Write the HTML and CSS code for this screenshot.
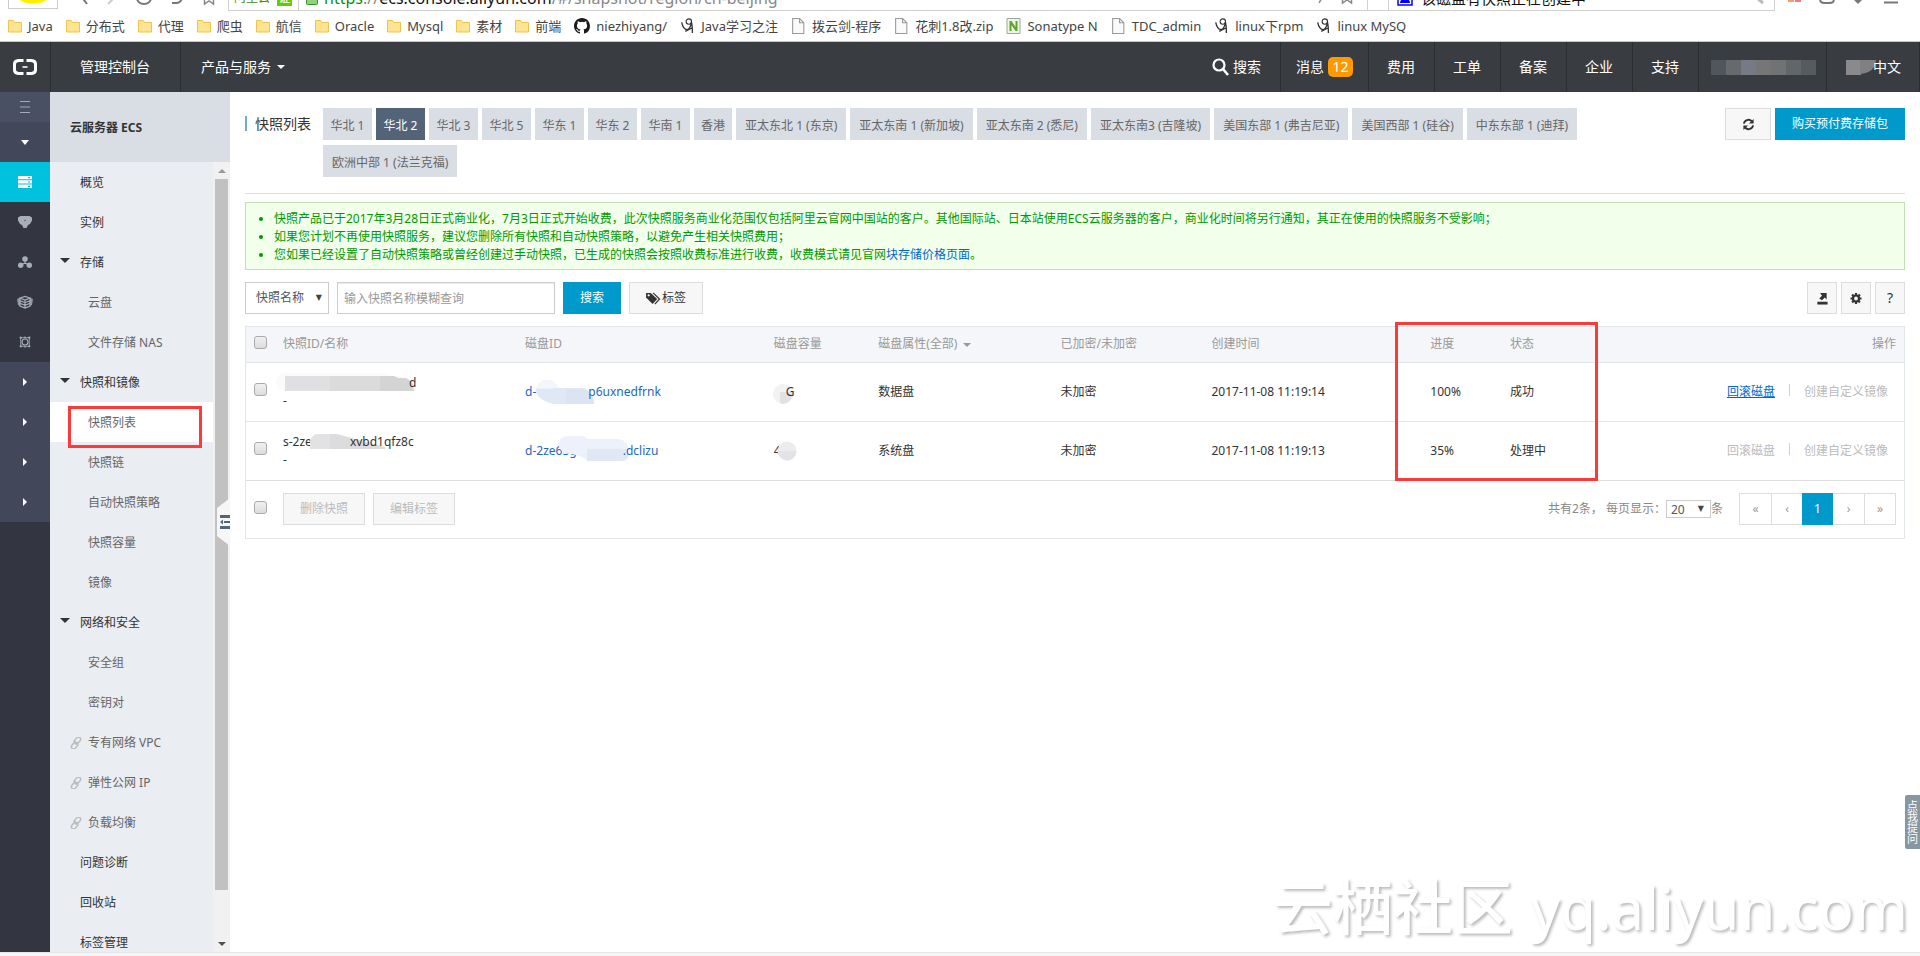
FILE: index.html
```
<!DOCTYPE html>
<html lang="zh-CN">
<head>
<meta charset="utf-8">
<title>快照列表 - 云服务器 ECS</title>
<link rel="stylesheet" href="styles.css">
</head>
<body>
<svg class="defs" aria-hidden="true">
  <symbol id="folder" viewBox="0 0 14 14"><path d="M.5 1.5h5l1 2h7v9.500h-13z" fill="#fde48f" stroke="#efc350"/></symbol>
  <symbol id="page" viewBox="0 0 12 15"><path d="M.5.5h6.500l4 4v10h-10.500z" fill="#fafafa" stroke="#999"/><path d="M7 .5v4h4" fill="none" stroke="#999"/></symbol>
  <symbol id="doodle" viewBox="0 0 15 18"><circle cx="9" cy="4" r="3" fill="none" stroke="#333" stroke-width="1.300"/><path d="M1 5c1 5 3 8 6 8s4-3 5-8c1 4 1 8 1 12M5 15l8-4" fill="none" stroke="#333" stroke-width="1.500"/></symbol>
  <symbol id="chain" viewBox="0 0 12 12"><g fill="none" stroke="#bbb" stroke-width="1.400"><rect x="5" y="-.5" width="4.500" height="7.500" rx="2.200" transform="rotate(40 7 3.500)"/><rect x="2.500" y="5" width="4.500" height="7.500" rx="2.200" transform="rotate(40 5 8.500)"/></g></symbol>
</svg>

<header class="browser">
  <div class="address-row">
    <span class="avatar"></span>
    <svg class="nav-icons" viewBox="0 0 150 11" aria-hidden="true"><g fill="none" stroke="#777" stroke-width="2"><path d="M12 -4l6 8"/><path d="M39 4l8-8" stroke="#ccc"/><path d="M68-2a7 6 0 0 0 14 0"/><path d="M103 3h4a6 6 0 0 0 6-5"/></g></svg>
    <svg class="star" viewBox="0 0 12 11" aria-hidden="true"><path d="M1.500-4v8l4.500-3 4.500 3v-8" fill="none" stroke="#888" stroke-width="1.500"/></svg>
    <div class="address">
      <span class="site">阿里云</span><span class="cert">证</span>
      <span class="rule"></span>
      <svg class="lock" viewBox="0 0 12 14"><rect x=".5" y=".5" width="11" height="13" rx="1" fill="#8fd07c" stroke="#3c8d2f"/></svg>
      <span class="url"><b class="scheme">https</b>://<b class="host">ecs.console.aliyun.com</b>/#/snapshot/region/cn-beijing</span>
      <svg class="star bolt" viewBox="0 0 12 11" aria-hidden="true"><path d="M6-3l-4 7" stroke="#888" stroke-width="1.500"/></svg>
      <svg class="star star-end" viewBox="0 0 12 11" aria-hidden="true"><path d="M1.500-4v8l4.500-3 4.500 3v-8" fill="none" stroke="#888" stroke-width="1.500"/></svg>
      <span class="rule"></span><span class="dot"></span><span class="rule"></span>
      <svg class="paw" viewBox="0 0 16 16"><rect x="1" y="1" width="14" height="14" fill="#fff" stroke="#00f" stroke-width="1.500"/><path d="M3 13c0-3 3-5 5-5s5 2 5 5z" fill="#00f"/></svg>
      <span class="query">该磁盘有快照正在创建中</span>
      <svg class="lens" viewBox="0 0 12 11"><path d="M3-1l6 5" stroke="#bbb" stroke-width="3"/></svg>
    </div>
    <svg class="tool-icons" viewBox="0 0 145 11" aria-hidden="true"><path d="M13 0h6v2h-6z" fill="#fb9a6a"/><path d="M20 0h6v2h-6z" fill="#f0787e"/><path d="M45-2c0 4 1 5 5 5h4c4 0 5-1 5-5" fill="none" stroke="#777" stroke-width="2"/><path d="M79 0h8l-4 4z" fill="#777"/><path d="M109 1.500h14v2h-14z" fill="#777"/></svg>
  </div>
  <nav class="bookmarks" aria-label="书签">
    <a href="#"><svg class="i14"><use href="#folder"/></svg>Java</a>
    <a href="#"><svg class="i14"><use href="#folder"/></svg>分布式</a>
    <a href="#"><svg class="i14"><use href="#folder"/></svg>代理</a>
    <a href="#"><svg class="i14"><use href="#folder"/></svg>爬虫</a>
    <a href="#"><svg class="i14"><use href="#folder"/></svg>航信</a>
    <a href="#"><svg class="i14"><use href="#folder"/></svg>Oracle</a>
    <a href="#"><svg class="i14"><use href="#folder"/></svg>Mysql</a>
    <a href="#"><svg class="i14"><use href="#folder"/></svg>素材</a>
    <a href="#"><svg class="i14"><use href="#folder"/></svg>前端</a>
    <a href="#"><svg class="i16" viewBox="0 0 16 16"><path fill="#1b1b1b" d="M8 0C3.580 0 0 3.580 0 8c0 3.540 2.290 6.530 5.470 7.590.4.070.55-.17.55-.38 0-.19-.01-.82-.01-1.490-2.010.37-2.530-.49-2.690-.94-.09-.23-.48-.94-.82-1.130-.28-.15-.68-.52-.01-.53.63-.01 1.080.58 1.230.82.72 1.210 1.870.87 2.330.66.07-.52.28-.87.51-1.070-1.780-.2-3.640-.89-3.640-3.950 0-.87.31-1.590.82-2.150-.08-.2-.36-1.020.08-2.120 0 0 .67-.21 2.200.82a7.500 7.500 0 0 1 4 0c1.530-1.040 2.200-.82 2.200-.82.44 1.100.16 1.920.08 2.120.51.56.82 1.270.82 2.150 0 3.070-1.870 3.750-3.650 3.950.29.25.54.73.54 1.480 0 1.070-.01 1.930-.01 2.200 0 .21.15.46.55.38A8 8 0 0 0 16 8c0-4.420-3.580-8-8-8z"/></svg>niezhiyang/</a>
    <a href="#"><svg class="i15"><use href="#doodle"/></svg>Java学习之注</a>
    <a href="#"><svg class="i15"><use href="#page"/></svg>拨云剑-程序</a>
    <a href="#"><svg class="i15"><use href="#page"/></svg>花刺1.8改.zip</a>
    <a href="#"><svg class="i15" viewBox="0 0 14 16"><path d="M.5.5h13v15h-13z" fill="#eef5e8" stroke="#9a9"/><path d="M3 13V3h2l4 6V3h2v10H9L5 7v6z" fill="#5fa52a"/></svg>Sonatype N</a>
    <a href="#"><svg class="i15"><use href="#page"/></svg>TDC_admin</a>
    <a href="#"><svg class="i15"><use href="#doodle"/></svg>linux下rpm</a>
    <a href="#"><svg class="i15"><use href="#doodle"/></svg>linux MySQ</a>
  </nav>
</header>

<nav class="topbar" aria-label="控制台导航">
  <a class="logo" href="#" aria-label="阿里云"><svg viewBox="0 0 24 16"><g fill="none" stroke="#fff" stroke-width="3"><path d="M10.500 1.500H5.500Q1.500 2 1.500 5v6q0 3 4 3.500h5M13.500 1.500h5q4 .5 4 3.500v6q0 3-4 3.500h-5"/></g><path d="M9.500 7.200h5v1.600h-5z" fill="#fff"/></svg></a>
  <a class="home" href="#">管理控制台</a>
  <a class="products" href="#">产品与服务<span class="caret"></span></a>
  <span class="grow"></span>
  <a class="search" href="#"><svg viewBox="0 0 17 18"><circle cx="7" cy="7" r="5.500" fill="none" stroke="#fff" stroke-width="2.200"/><path d="M11 11l5 6" stroke="#fff" stroke-width="2.600"/></svg>搜索</a>
  <a class="messages" href="#">消息<span class="badge">12</span></a>
  <a href="#">费用</a>
  <a href="#">工单</a>
  <a href="#">备案</a>
  <a href="#">企业</a>
  <a href="#">支持</a>
  <a class="user" href="#" aria-label="账号"><svg viewBox="0 0 105 15"><path fill="#51555c" d="M0 0h15v15H0z"/><path fill="#666a6d" d="M15 0h15v15H15z"/><path fill="#777a85" d="M30 0h15v15H30z"/><path fill="#767677" d="M45 0h15v15H45z"/><path fill="#717274" d="M60 0h15v15H60z"/><path fill="#626669" d="M75 0h15v15H75z"/><path fill="#565b5d" d="M90 0h15v15H90z"/></svg></a>
  <a class="lang" href="#"><svg viewBox="0 0 30 15"><path fill="#8a8a8d" d="M0 0h15v15H0z"/><path fill="#808081" d="M14 0h16c-1 8-5 13-16 14z"/></svg>中文</a>
</nav>

<div class="console">
  <nav class="rail" aria-label="产品">
    <button class="fold" aria-label="展开"><svg viewBox="0 0 10 12"><path d="M0 .5h10M0 6h10M0 11.500h10" stroke="#a5aab8" stroke-width="1.200"/></svg></button>
    <button class="group"><svg viewBox="0 0 8 5"><path d="M0 0h8l-4 5z" fill="#fff"/></svg></button>
    <button class="current" aria-label="ECS"><svg viewBox="0 0 14 12"><path d="M0 0h14v3.300H0zM0 4.300h14v3.300H0zM0 8.600h14v3.300H0z" fill="#fff"/><path d="M10 1h2v1.200h-2zM10 5.400h2v1.200h-2zM10 9.700h2v1.200h-2z" fill="#00c1de"/></svg></button>
    <button aria-label="RDS"><svg viewBox="0 0 14 12"><path d="M2.500 0h9L14 1.500v3L12 8l-2 1-1.500 3h-3L4 9 2 8 0 4.500v-3z" fill="#a7adb9"/><circle cx="7" cy="4.500" r=".8" fill="#555b68"/></svg></button>
    <button aria-label="SLB"><svg viewBox="0 0 14 12"><g fill="#a7adb9"><circle cx="7" cy="3" r="2.800"/><circle cx="2.700" cy="9.300" r="2.700"/><circle cx="11.300" cy="9.300" r="2.700"/></g><path d="M7 4v4M3 9l4-2 4 2" fill="none" stroke="#a7adb9" stroke-width="1.300"/></svg></button>
    <button aria-label="OSS"><svg class="wide" viewBox="0 0 16 12"><path d="M0 3l3-1v8L1 9zM16 3l-3-1v8l2-1z" fill="#8e95a3"/><g fill="none" stroke="#a7adb9" stroke-width="1.200"><path d="M3 2l5-1.500L13 2 8 4zM3 2v8l5 2 5-2V2M3 4.700l5 2 5-2M3 7.300l5 2 5-2M8 4v8"/></g></svg></button>
    <button aria-label="CDN"><svg viewBox="0 0 14 14"><circle cx="7" cy="7" r="3.500" fill="none" stroke="#a7adb9" stroke-width="1.300"/><path d="M2 2h10v10H2z" fill="none" stroke="#a7adb9"/><g fill="#a7adb9"><circle cx="2" cy="2" r="1.300"/><circle cx="12" cy="2" r="1.300"/><circle cx="2" cy="12" r="1.300"/><circle cx="12" cy="12" r="1.300"/><circle cx="7" cy="1.500" r="1"/><circle cx="7" cy="12.500" r="1"/></g></svg></button>
    <button class="group"><svg class="side" viewBox="0 0 4 8"><path d="M0 0l4 4-4 4z" fill="#fff"/></svg></button>
    <button class="group"><svg class="side" viewBox="0 0 4 8"><path d="M0 0l4 4-4 4z" fill="#fff"/></svg></button>
    <button class="group"><svg class="side" viewBox="0 0 4 8"><path d="M0 0l4 4-4 4z" fill="#fff"/></svg></button>
    <button class="group"><svg class="side" viewBox="0 0 4 8"><path d="M0 0l4 4-4 4z" fill="#fff"/></svg></button>
  </nav>

  <aside class="menu">
    <h2>云服务器 ECS</h2>
    <div class="menu-body">
      <ul>
        <li><a href="#">概览</a></li>
        <li><a href="#">实例</a></li>
        <li><a class="open" href="#">存储</a></li>
        <li><a class="sub" href="#">云盘</a></li>
        <li><a class="sub" href="#">文件存储 NAS</a></li>
        <li><a class="open" href="#">快照和镜像</a></li>
        <li class="active"><a class="sub" href="#">快照列表</a><span class="mark mark-menu"></span></li>
        <li><a class="sub" href="#">快照链</a></li>
        <li><a class="sub" href="#">自动快照策略</a></li>
        <li><a class="sub" href="#">快照容量</a></li>
        <li><a class="sub" href="#">镜像</a></li>
        <li><a class="open" href="#">网络和安全</a></li>
        <li><a class="sub" href="#">安全组</a></li>
        <li><a class="sub" href="#">密钥对</a></li>
        <li><a class="linked" href="#"><svg><use href="#chain"/></svg>专有网络 VPC</a></li>
        <li><a class="linked" href="#"><svg><use href="#chain"/></svg>弹性公网 IP</a></li>
        <li><a class="linked" href="#"><svg><use href="#chain"/></svg>负载均衡</a></li>
        <li><a href="#">问题诊断</a></li>
        <li><a href="#">回收站</a></li>
        <li><a href="#">标签管理</a></li>
      </ul>
      <div class="scrollbar"><i class="up"></i><i class="thumb"></i><i class="down"></i></div>
    </div>
    <button class="handle" aria-label="收起菜单"><svg viewBox="0 0 13 48"><path d="M0 10L13 0v48L0 38z" fill="#f6f6f6"/><path d="M3 17h10v3H3zM7 23h6v2H7zM3 28h10v3H3z" fill="#546478"/><path d="M6 21.500v5L3 24z" fill="#546478"/></svg></button>
  </aside>

  <main class="content">
    <div class="heading">
      <h1>快照列表</h1>
      <div class="regions">
        <button>华北 1</button>
        <button class="on">华北 2</button>
        <button>华北 3</button>
        <button>华北 5</button>
        <button>华东 1</button>
        <button>华东 2</button>
        <button>华南 1</button>
        <button>香港</button>
        <button class="long">亚太东北 1 (东京)</button>
        <button class="long">亚太东南 1 (新加坡)</button>
        <button class="long">亚太东南 2 (悉尼)</button>
        <button class="long">亚太东南3 (吉隆坡)</button>
        <button class="long">美国东部 1 (弗吉尼亚)</button>
        <button class="long">美国西部 1 (硅谷)</button>
        <button class="long">中东东部 1 (迪拜)</button>
        <button class="long">欧洲中部 1 (法兰克福)</button>
      </div>
      <div class="heading-actions">
        <button class="btn refresh" aria-label="刷新"><svg viewBox="0 0 14 14"><path d="M2 6a5 5 0 0 1 8.500-2.500M12 8a5 5 0 0 1-8.500 2.500" fill="none" stroke="#333" stroke-width="2"/><path d="M12.500 1v5h-5zM1.500 13V8h5z" fill="#333"/></svg></button>
        <button class="btn primary buy">购买预付费存储包</button>
      </div>
    </div>

    <ul class="notice">
      <li>快照产品已于2017年3月28日正式商业化，7月3日正式开始收费，此次快照服务商业化范围仅包括阿里云官网中国站的客户。其他国际站、日本站使用ECS云服务器的客户，商业化时间将另行通知，其正在使用的快照服务不受影响；</li>
      <li>如果您计划不再使用快照服务，建议您删除所有快照和自动快照策略，以避免产生相关快照费用；</li>
      <li>您如果已经设置了自动快照策略或曾经创建过手动快照，已生成的快照会按照收费标准进行收费，收费模式请见官网<a href="#">块存储价格页面</a>。</li>
    </ul>

    <form class="filters">
      <span class="pick"><select aria-label="查询字段"><option>快照名称</option></select></span>
      <input class="keyword" type="text" aria-label="快照名称" placeholder="输入快照名称模糊查询">
      <button type="button" class="btn primary find">搜索</button>
      <button type="button" class="btn tag"><svg viewBox="0 0 16 14"><path d="M0 1h5l7 6.500-5 5.500L0 6z" fill="#333"/><circle cx="2.800" cy="3.600" r="1.200" fill="#fff"/><path d="M7.500 1l7 6.500-5 5.500" fill="none" stroke="#333" stroke-width="1.300"/></svg>标签</button>
      <span class="grow"></span>
      <span class="tools">
        <button type="button" class="btn" aria-label="导出"><svg viewBox="0 0 12 14"><path d="M1 10.500h11V13.500H1z" fill="#333"/><path d="M4 1h7v7L9 6 6 9 3 7l3-3z" fill="#333"/></svg></button>
        <button type="button" class="btn" aria-label="设置"><svg viewBox="0 0 12 12"><circle cx="6" cy="6" r="3" fill="none" stroke="#333" stroke-width="2.200"/><path d="M6 .5v2M6 9.500v2M.5 6h2M9.500 6h2M2.100 2.100l1.400 1.400M8.500 8.500l1.400 1.400M2.100 9.900l1.400-1.400M8.500 3.500l1.400-1.400" stroke="#333" stroke-width="2.200"/></svg></button>
        <button type="button" class="btn help">?</button>
      </span>
    </form>

    <section class="list">
      <table>
        <colgroup><col class="c-check"><col class="c-id"><col class="c-disk"><col class="c-size"><col class="c-attr"><col class="c-enc"><col class="c-time"><col class="c-prog"><col class="c-state"><col></colgroup>
        <thead>
          <tr><th><input type="checkbox" aria-label="全选"></th><th>快照ID/名称</th><th>磁盘ID</th><th>磁盘容量</th><th>磁盘属性(全部)<span class="caret"></span></th><th>已加密/未加密</th><th>创建时间</th><th>进度</th><th>状态</th><th class="ops-head">操作</th></tr>
        </thead>
        <tbody>
          <tr>
            <td><input type="checkbox" aria-label="选择快照 1"></td>
            <td><span class="masked"><svg class="m-id1" viewBox="0 0 126 24"><path d="M2 2Q-7 4-7 11T3 20h121l3-6q-3-8-12-9l-10-1-2-2z" fill="#fafafa"/><path d="M2 5h45v15H2z" fill="#e0e0e2"/><path d="M47 5h50v15H47z" fill="#dcdbdb"/><path d="M97 5h14l4 2h8q8 3 8 13H97z" fill="#d4d4d5"/></svg>d</span><br>-</td>
            <td><a class="masked" href="#">d-<svg class="m-d1" viewBox="0 0 52 24"><path d="M0 9Q3 0 11 0t11 8h26q10 5 10 16H18Q0 20 0 9z" fill="#e0e8f6"/><path d="M0 9Q3 0 11 0t11 8z" fill="#f3f6fc"/><path d="M30 9h18q10 4 10 15H30z" fill="#dce4f3"/></svg>p6uxnedfrnk</a></td>
            <td><span class="masked"><svg class="m-s1" viewBox="0 0 12 24"><circle cx="9" cy="14" r="10" fill="#f2f2f3"/><path d="M6 12h13q0 10-10 12l-3-1z" fill="#e3e1e5"/></svg>G</span></td>
            <td>数据盘</td><td>未加密</td><td>2017-11-08 11:19:14</td><td>100%</td><td>成功</td>
            <td class="ops"><a class="live" href="#">回滚磁盘</a><i></i><a href="#">创建自定义镜像</a></td>
          </tr>
          <tr>
            <td><input type="checkbox" aria-label="选择快照 2"></td>
            <td><span class="masked">s-2ze<svg class="m-id2" viewBox="0 0 38 24"><path d="M-2 19V12Q0 4 7 4h18l48 13v2z" fill="#dddcdc"/><path d="M-2 19V12Q0 4 7 4h11v15z" fill="#e2e2e4"/></svg>xvbd1qfz8c</span><br>-</td>
            <td><a class="masked" href="#">d-2ze63g<svg class="m-d2" viewBox="0 0 46 24"><path d="M-18 8Q-19-3-9-3h16l4 3h31q10 2 9 12v6q-1 4-8 4H10Q6 16-14 14z" fill="#edf2fa"/><path d="M10 10h41v8q0 4-8 4H10z" fill="#e1e8f4"/></svg>.dclizu</a></td>
            <td><span class="masked">4<svg class="m-s2" viewBox="0 0 18 24"><circle cx="6" cy="12" r="9.500" fill="#ececee"/><path d="M-3 12h18.500q-1 9-9.500 9.500-7-1-9-9.500z" fill="#e4e2e6"/></svg></span></td>
            <td>系统盘</td><td>未加密</td><td>2017-11-08 11:19:13</td><td>35%</td><td>处理中</td>
            <td class="ops"><a href="#">回滚磁盘</a><i></i><a href="#">创建自定义镜像</a></td>
          </tr>
        </tbody>
      </table>
      <footer>
        <input type="checkbox" aria-label="全选本页">
        <button class="btn batch" disabled>删除快照</button>
        <button class="btn batch" disabled>编辑标签</button>
        <span class="grow"></span>
        <label class="per-page">共有2条， 每页显示：<span class="pick small"><select><option>20</option></select></span>条</label>
        <nav class="pager" aria-label="分页"><a href="#">«</a><a href="#">‹</a><a class="on" href="#">1</a><a href="#">›</a><a href="#">»</a></nav>
      </footer>
      <span class="mark mark-table"></span>
    </section>
    <button class="ask">点我提问</button>
    <div class="watermark"><span class="wm-cn">云栖社区</span><span class="wm-url">yq.aliyun.com</span></div>
  </main>
</div>
<div class="bottom-edge"></div>
</body>
</html>
```

FILE: styles.css
```
* { box-sizing: border-box; }

body {
  margin: 0;
  height: 100vh;
  display: flex;
  flex-direction: column;
  overflow: hidden;
  background: #fff;
  color: #333;
  font: 12px/18px "Noto Sans", "Noto Sans CJK SC", sans-serif;
}

a { color: inherit; text-decoration: none; }
button, input, select { font: inherit; color: inherit; margin: 0; }
button { border: 0; padding: 0; background: none; cursor: pointer; white-space: nowrap; }
ul { list-style: none; margin: 0; padding: 0; }
h1, h2 { margin: 0; font-weight: 400; }
svg { display: block; flex: none; overflow: visible; }
.defs { position: absolute; width: 0; height: 0; }
.grow { flex: 1; }

.caret {
  display: inline-block;
  border: 4px solid transparent;
  border-top-color: currentColor;
  border-bottom: 0;
  margin-left: 6px;
  vertical-align: middle;
}

/* Browser chrome */
.browser { flex: none; border-bottom: 1px solid #c8c8c8; overflow: hidden; }
.address-row { height: 11px; display: flex; align-items: flex-end; overflow: hidden; }
.avatar {
  flex: none;
  width: 50px;
  height: 20px;
  margin: 0 11px 2px 8px;
  border: 1px solid #ccc;
  background: radial-gradient(ellipse at 50% 35%, #fe0 0 40%, #fff 50%);
}
.nav-icons { width: 150px; height: 11px; }
.star { width: 12px; height: 11px; overflow: hidden; margin-right: -3px; margin-left: -16px; }
.address {
  flex: 1;
  height: 26px;
  margin-left: 16px;
  display: flex;
  align-items: center;
  border: 1px solid #d0d0d0;
  font-size: 16px;
  line-height: 20px;
  white-space: nowrap;
}
.site { font-size: 12px; color: #3a8e12; margin-left: 5px; }
.cert { background: #6c0; color: #fff; font-size: 12px; width: 15px; height: 16px; line-height: 16px; text-align: center; margin: 0 6px 0 7px; }
.rule { width: 1px; align-self: stretch; background: #d0d0d0; }
.lock { width: 12px; height: 14px; margin: 0 6px 0 7px; }
.url { color: #888; flex: 1; }
.url b { font-weight: 400; }
.scheme { color: #0a8f0a; }
.host { color: #111; }
.bolt { margin: 0 12px 0 0; align-self: flex-end; }
.star-end { margin: 0 14px 0 0; align-self: flex-end; }
.dot { width: 4px; height: 4px; border-radius: 2px; background: #999; margin: 0 8px; }
.paw { width: 16px; height: 16px; margin: 0 8px; }
.query { color: #111; width: 333px; font-size: 15px; }
.lens { width: 12px; height: 11px; margin-right: 8px; align-self: flex-end; overflow: hidden; }
.tool-icons { width: 145px; height: 11px; }

.bookmarks {
  height: 30px;
  display: flex;
  align-items: center;
  gap: 13px;
  padding-left: 8px;
  font-size: 13px;
  line-height: 18px;
  color: #444;
  white-space: nowrap;
}
.bookmarks a { display: flex; align-items: center; gap: 6px; }
.i14 { width: 14px; height: 16px; }
.i15 { width: 15px; height: 16px; }
.i16 { width: 16px; height: 16px; }

/* Console top bar */
.topbar {
  flex: none;
  height: 50px;
  display: flex;
  background: #393d41;
  color: #fff;
  font-size: 14px;
}
.topbar a { display: flex; align-items: center; padding: 0 19px 0 18px; border-right: 1px solid #2b2e31; }
.topbar .logo { width: 51px; padding: 0 13px; }
.logo svg { width: 24px; height: 16px; }
.topbar .home { padding: 0 30px 0 29px; }
.topbar .products { padding-left: 20px; border: 0; }
.topbar .search { padding: 0 19px 0 0; }
.search svg { width: 17px; height: 18px; margin-right: 4px; }
.topbar .messages { padding: 0 15px; }
.badge { background: #f90; border-radius: 5px; line-height: 20px; width: 25px; text-align: center; margin-left: 4px; }
.topbar .user { padding: 0 10px 0 12px; }
.user svg { width: 105px; height: 15px; }
.topbar .lang { padding: 0 18px 0 19px; }
.lang svg { width: 30px; height: 15px; margin-right: -3px; }

/* Left side */
.console { flex: 1; min-height: 0; display: flex; }
.rail { flex: none; width: 50px; background: #333641; display: flex; flex-direction: column; }
.rail button { height: 40px; flex: none; display: flex; align-items: center; justify-content: center; }
.rail svg { width: 14px; height: 12px; }
.rail .fold { height: 30px; background: #4a5064; }
.fold svg { width: 10px; }
.rail .group { background: #42475a; }
.rail .current { background: #00c1de; }
.rail .group svg { width: 8px; height: 5px; }
.rail .group .side { width: 4px; height: 8px; }
.rail .wide { width: 16px; }

.menu { flex: none; width: 180px; display: flex; flex-direction: column; position: relative; background: #eaedf1; }
.menu h2 { flex: none; height: 70px; line-height: 72px; padding-left: 20px; background: #d9dde4; font-size: 12px; font-weight: 700; }
.menu-body { flex: 1; min-height: 0; display: flex; }
.menu ul { flex: 1; overflow: hidden; }
.menu li { position: relative; height: 40px; }
.menu li a { display: flex; align-items: center; height: 40px; padding: 2px 0 0 30px; }
.menu li .sub, .menu li .linked { padding-left: 38px; color: #666; }
.menu li .linked { padding-left: 20px; gap: 6px; }
.linked svg { width: 12px; height: 12px; }
.menu .active { background: #fff; }
.menu li .open { padding-left: 10px; gap: 10px; }
.open::before { content: ""; border: 5px solid transparent; border-top-color: #333; border-bottom: 0; margin-bottom: 6px; }
.scrollbar { flex: none; width: 17px; background: #f1f1f1; display: flex; flex-direction: column; align-items: center; padding: 7px 0 6px; }
.up, .down { border: 4px solid transparent; }
.up { border-bottom-color: #999; border-top: 0; }
.down { border-top-color: #505050; border-bottom: 0; margin-top: auto; }
.thumb { width: 13px; height: calc(100% - 66px); margin-top: 6px; background: #c1c1c1; }
.handle { position: absolute; right: 0; top: 47.200%; }
.handle svg { width: 13px; height: 48px; }

.mark { position: absolute; border: 3px solid #ff3838; pointer-events: none; }
.mark-menu { left: 18px; top: 4px; width: 134px; height: 42px; z-index: 1; }
.mark-table { left: 69.300%; top: -5px; width: 203px; height: 159px; }

/* Content */
.content { flex: 1; min-width: 0; padding: 16px 15px 0; position: relative; }
.heading { display: flex; align-items: flex-start; padding-bottom: 16px; border-bottom: 1px solid #ddd; }
h1 { flex: none; font-size: 14px; line-height: 15px; margin: 8px 12px 0 0; padding-left: 8px; border-left: 2px solid #6fa8dc; }
.regions { flex: 1; display: flex; flex-wrap: wrap; gap: 5px 4px; margin-right: 30px; }
.regions button { height: 32px; min-width: 49px; padding: 4px 7px 0; background: #d9dde4; color: #666; }
.regions button:nth-child(8) { min-width: 38px; }
.regions .long { padding: 4px 9px 0; }
.regions .on { background: #546478; color: #fff; }
.heading-actions { display: flex; gap: 4px; }

.btn { height: 32px; display: flex; align-items: center; justify-content: center; background: #f7f7f7; border: 1px solid #ddd; }
.primary { background: #09c; border-color: #09c; color: #fff; }
.refresh { width: 46px; }
.refresh svg { width: 13px; height: 13px; }
.buy { width: 130px; }

.notice { margin-top: 8px; padding: 7px 0 5px 28px; list-style: disc; background: #f2ffea; border: 1px solid #c3ddb5; color: #090; }
.notice a { color: #06c; }

.filters { display: flex; margin: 12px 0; gap: 8px; }
.pick { position: relative; display: inline-block; }
.pick select { appearance: none; width: 84px; height: 32px; padding: 0 10px; background: #fff; border: 1px solid #ccc; border-radius: 0; color: #555; }
.pick::after { content: "▼"; position: absolute; right: 7px; top: 0; font: 8px/32px "DejaVu Sans", sans-serif; color: #444; pointer-events: none; }
.keyword { width: 218px; height: 32px; padding: 0 6px; border: 1px solid #ccc; box-shadow: inset 0 1px 1px rgba(0, 0, 0, .08); }
.keyword::placeholder { color: #999; }
.find { width: 58px; }
.tag { width: 74px; }
.tag svg { width: 15px; height: 13px; margin-right: 1px; }
.tools { display: flex; gap: 4px; }
.tools .btn { width: 30px; }
.tools svg { width: 12px; height: 13px; }
.help { font-size: 14px; }

.list { position: relative; border: 1px solid #e1e6eb; }
table { width: 100%; table-layout: fixed; border-collapse: collapse; }
.c-check { width: 29px; }
.c-id { width: 14.600%; }
.c-disk { width: 15%; }
.c-size { width: 6.300%; }
.c-attr { width: 11%; }
.c-enc { width: 9.100%; }
.c-time { width: 13.200%; }
.c-prog { width: 4.800%; }
.c-state { width: 8%; }
th, td { padding: 0 8px; text-align: left; border-bottom: 1px solid #e1e6eb; white-space: nowrap; }
th { height: 35px; background: #f4f6fa; color: #999; font-weight: 400; }
td { height: 59px; }
tbody tr:last-child td { border-color: #ddd; }
th .caret { border-width: 4px 4px 0; }
.ops-head { text-align: right; }
td.ops { text-align: right; padding-right: 16px; color: #bbb; }
.ops i { display: inline-block; width: 1px; height: 12px; background: #cdd6b8; margin: 0 14px; }
.ops .live { color: #06c; text-decoration: underline; }
td a.masked { color: #1a66c9; }

input[type="checkbox"] {
  appearance: none;
  display: block;
  width: 13px;
  height: 13px;
  margin-bottom: 4px;
  border: 1px solid #aaa;
  border-radius: 3px;
  background: linear-gradient(#f0f0f0, #dcdcdc);
}

.masked { display: inline-flex; align-items: center; height: 18px; vertical-align: top; }
td .masked svg { height: 24px; margin: -3px 0; }
td a.masked, td .masked:only-child { vertical-align: middle; }
.m-id1 { width: 126px; }
.m-d1 { width: 52px; }
.m-s1 { width: 12px; }
.m-id2 { width: 38px; }
.m-d2 { width: 46px; }
.m-s2 { width: 18px; }

footer { height: 57px; display: flex; align-items: center; padding: 0 8px; gap: 8px; }
footer input[type="checkbox"] { margin-right: 8px; }
.batch { width: 82px; color: #bbb; }
.per-page { display: flex; align-items: center; color: #888; white-space: pre; margin-right: 8px; }
.small select { width: 45px; height: 18px; padding: 0 4px; display: block; }
.small::after { line-height: 18px; }
.pager { display: flex; border: 1px solid #ddd; color: #999; }
.pager a { width: 31px; line-height: 30px; text-align: center; border-left: 1px solid #ddd; }
.pager a:first-child { border: 0; }
.pager .on { background: #09c; color: #fff; margin: -1px 0; line-height: 32px; border: 0; }
.pager .on + a { border: 0; }

.ask { position: absolute; right: 0; bottom: 103px; width: 15px; height: 54px; padding: 5px 2px; background: #8796a3; color: #fff; border-radius: 2px 0 0 2px; font-size: 11px; line-height: 11px; white-space: normal; }
.watermark { position: absolute; right: 12px; bottom: 8px; display: flex; align-items: baseline; gap: 18px; line-height: 72px; color: #fff; text-shadow: 2px 2px 3px #bbb; pointer-events: none; }
.wm-cn { font-size: 60px; font-weight: 500; }
.wm-url { font-size: 58px; }

.bottom-edge { flex: none; height: 4px; background: #f5f5f5; border-top: 1px solid #e5e5e5; }
```
